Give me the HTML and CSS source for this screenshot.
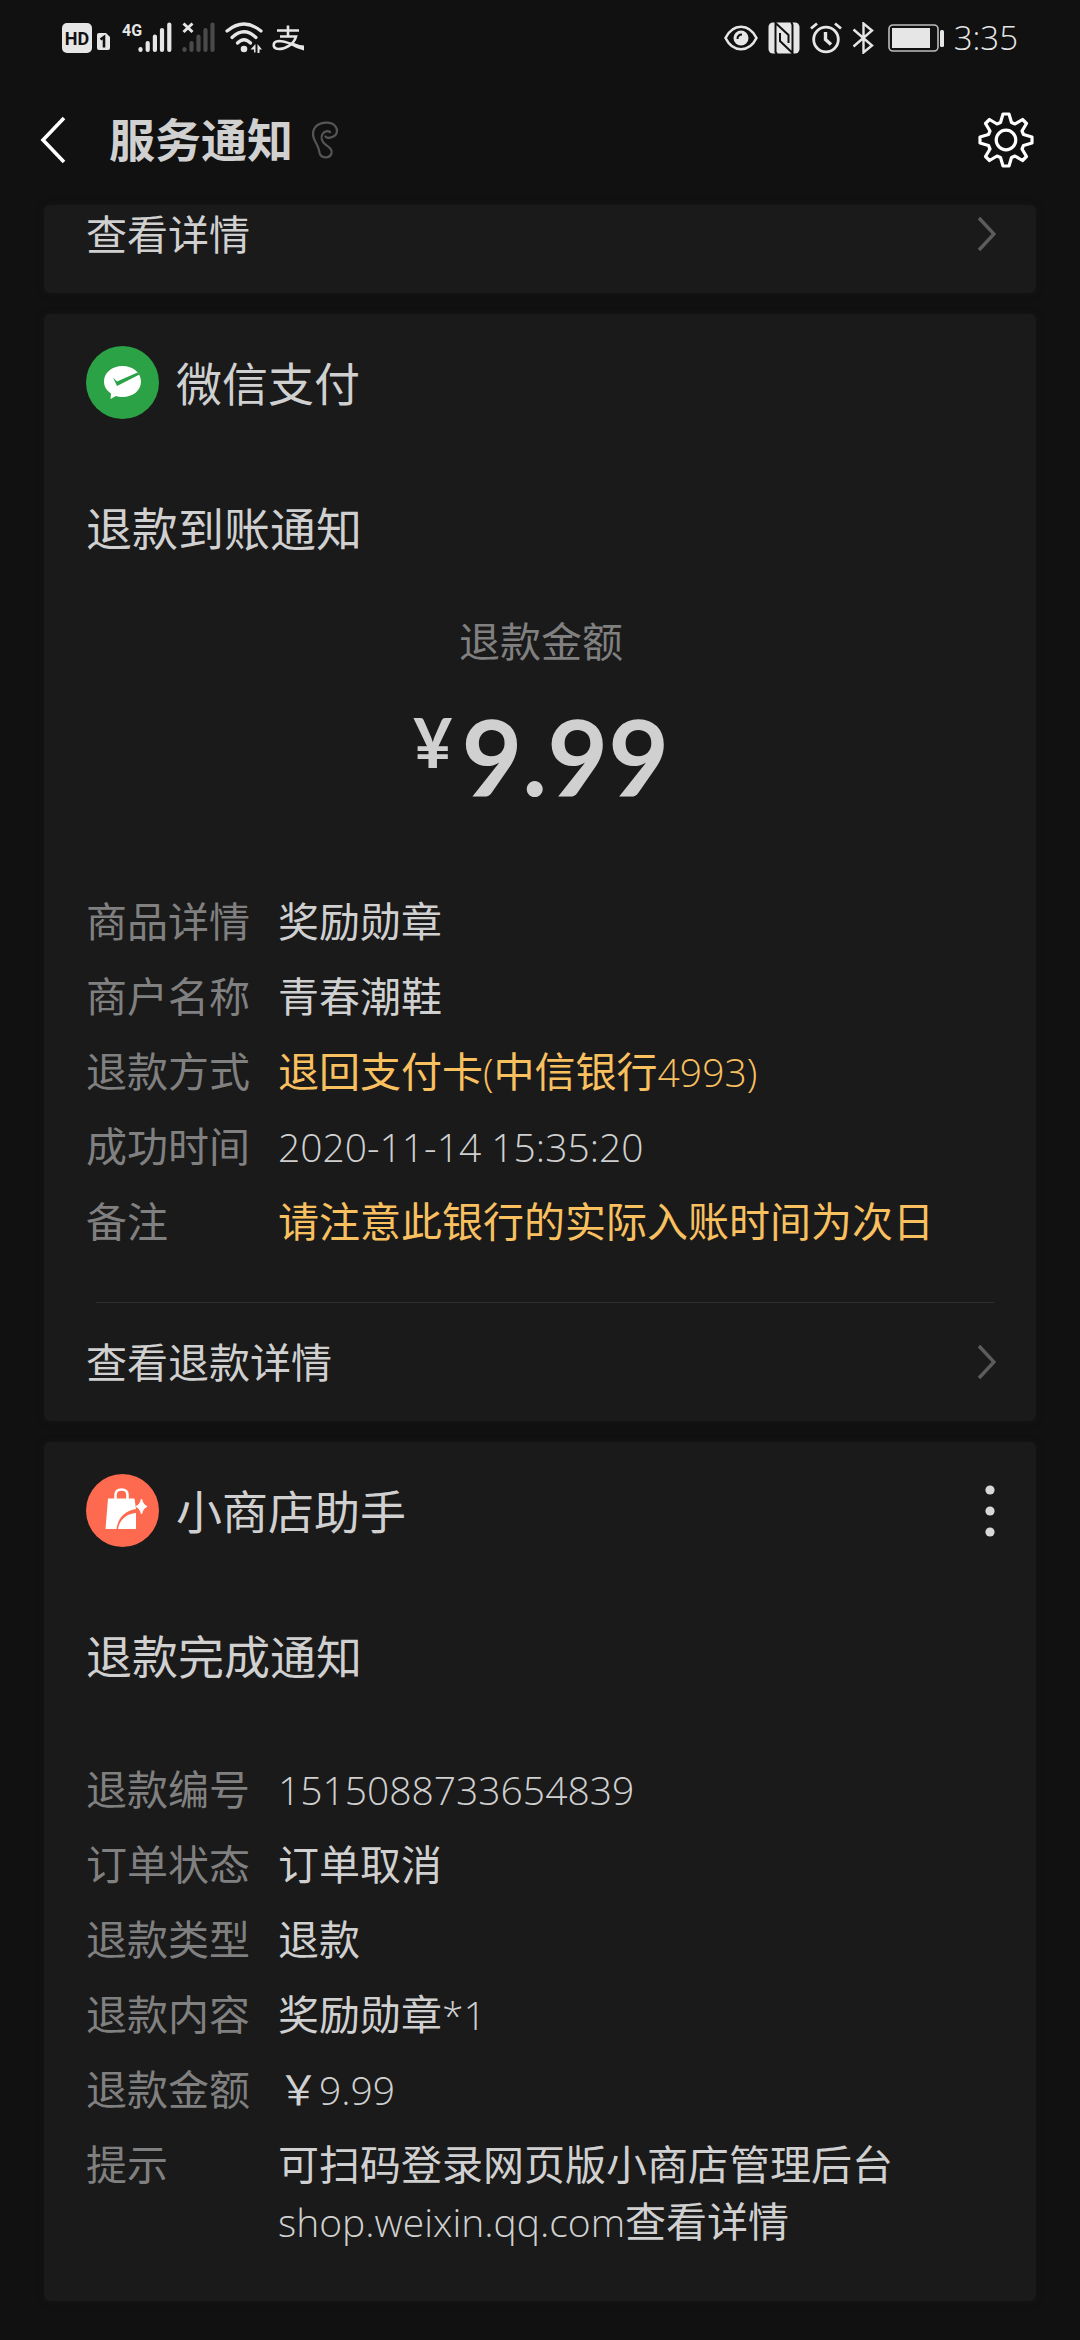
FILE: index.html
```html
<!DOCTYPE html>
<html lang="zh-CN">
<head>
<meta charset="utf-8">
<meta name="viewport" content="width=device-width, initial-scale=1">
<title>服务通知</title>
<link rel="stylesheet" href="styles.css">
</head>
<body>
<svg class="defs" aria-hidden="true">
  <symbol id="chevron" viewBox="0 0 20 36"><path d="M3 2 L18 18 L3 34" fill="none" stroke="#5c5c5c" stroke-width="3.4"/></symbol>
</svg>

<div class="status">
  <div class="status-group status-left">
    <svg width="50" height="32" viewBox="0 0 50 32" role="img" aria-label="HD 1">
      <rect x="0" y="1" width="30" height="30" rx="5" fill="#e6e6e6"/>
      <text x="15" y="23" class="hd-text">HD</text>
      <path d="M35 13 q0 -2 2 -2 h7 l4 4 v11 q0 2 -2 2 h-9 q-2 0 -2 -2z" fill="#e6e6e6"/>
      <path d="M38.5 17.5 L42 15 V25.5" fill="none" stroke="#111" stroke-width="2.6"/>
    </svg>
    <svg width="52" height="32" viewBox="0 0 52 32" role="img" aria-label="4G">
      <text x="1" y="14" class="net-text">4G</text>
      <g stroke="#e6e6e6" stroke-width="4.2" stroke-linecap="round"><path d="M19.5 27v1M26.7 21v7M33.9 14.5v13.5M41 8v20M48.3 2.5v25.5"/></g>
    </svg>
    <svg width="34" height="32" viewBox="0 0 34 32" aria-hidden="true">
      <g stroke="#4a4a4a" stroke-width="4.2" stroke-linecap="round"><path d="M2.5 27v1M9.5 21v7M16.5 14.5v13.5M23.5 8v20M30.5 2.5v25.5"/></g>
      <path d="M1.5 1.5 L10.5 10 M10.5 1.5 L1.5 10" stroke="#e6e6e6" stroke-width="3"/>
    </svg>
    <svg width="38" height="32" viewBox="0 0 38 32" aria-hidden="true">
      <g fill="none" stroke="#e6e6e6" stroke-width="3.2" stroke-linecap="round"><path d="M2 9 Q19 -5 36 9M7 15.5 Q19 4 31 15.5M12.5 21 Q19 14.5 25.5 21"/></g>
      <circle cx="19" cy="27" r="3.3" fill="#e6e6e6"/>
      <path d="M25.5 27.5 L30.5 22 V30.5 H29 V27.5z M32.5 22 L37 27.5 H34.5 V31 H32.5z" fill="#e6e6e6"/>
    </svg>
    <svg width="32" height="32" viewBox="0 0 32 32" aria-hidden="true">
      <g fill="none" stroke="#e6e6e6" stroke-width="2.6"><path d="M5 8.500H27M16 3.500V14M8 14.500H24C22 22 14 27 6.500 27C0 26.500 0 19.500 7 19C14 19 22 23.500 31 25.500"/></g>
      <path d="M20 20.5 Q26 23 32 23.500 V28.5 Q25 27 18.5 23z" fill="#e6e6e6"/>
    </svg>
  </div>
  <div class="status-group">
    <svg width="34" height="32" viewBox="0 0 34 32" aria-hidden="true">
      <path d="M1.500 16 C9 1 25 1 32.500 16 C25 31 9 31 1.500 16z" fill="none" stroke="#e6e6e6" stroke-width="2.6"/>
      <circle cx="17" cy="16" r="7.5" fill="#e6e6e6"/>
      <path d="M13.5 17 Q13.5 12.5 18 12.5" fill="none" stroke="#111" stroke-width="2"/>
    </svg>
    <svg width="32" height="32" viewBox="0 0 32 32" aria-hidden="true">
      <rect x="0.5" y="0.5" width="31" height="31" rx="4.5" fill="#e6e6e6"/>
      <path d="M7.5 0 V30 Q8 31 9 32M24.500 32V3 Q24 1 23 0M7.500 1 L20.500 13V21M24.500 31 L12 19V11" stroke="#111" stroke-width="2" fill="none"/>
    </svg>
    <svg width="32" height="32" viewBox="0 0 32 32" aria-hidden="true">
      <g fill="none" stroke="#e6e6e6" stroke-width="2.8"><circle cx="16" cy="17.5" r="12.3"/><path d="M1 6.500L7 1.500M25 1.500L31 6.500"/><path d="M15.500 10V17.500L21 22.500" stroke-width="3.4"/></g>
    </svg>
    <svg width="22" height="32" viewBox="0 0 22 32" aria-hidden="true">
      <path d="M1.500 7.500 L20 23.500 L11.500 30.500 V1.500 L20 8.500 L1.500 24.500" fill="none" stroke="#e6e6e6" stroke-width="2.4"/>
    </svg>
    <svg width="60" height="32" viewBox="-4 0 60 32" aria-hidden="true">
      <rect x="1" y="3" width="49" height="26" rx="4" fill="none" stroke="#bdbdbd" stroke-width="1.6"/>
      <rect x="4" y="6" width="38" height="20" fill="#e6e6e6"/>
      <rect x="52" y="8" width="4" height="17" rx="1.500" fill="#e6e6e6"/>
    </svg>
    <span class="clock">3:35</span>
  </div>
</div>

<header class="header">
  <button class="icon-btn back" aria-label="返回">
    <svg width="26" height="48" viewBox="0 0 26 48"><path d="M24 2 L3 24 L24 46" fill="none" stroke="#fff" stroke-width="3.6"/></svg>
  </button>
  <h1 class="title">服务通知</h1>
  <svg class="ear" width="28" height="38" viewBox="0 0 28 38" aria-hidden="true">
    <path d="M14.5 15.5 C15.5 17.5 19.5 17 22.5 15.5 C26.5 13.5 27 8.5 24.5 5.5 C21.5 1 12.5 0.5 7.5 3.5 C1.5 7 0.5 14 4 20 C6.5 24.5 8 28 8.5 31.5 C9.5 37.5 18.5 38 20.5 32.5 C22 28.5 18 26 15 24 C10.5 21 9.5 16 11.5 13 C13.500 10 17 9.500 19 11" fill="none" stroke="#555" stroke-width="2.2" stroke-linecap="round"/>
  </svg>
  <button class="icon-btn gear" aria-label="设置">
    <svg width="56" height="56" viewBox="-28 -28 56 56">
      <g fill="none" stroke="#fff" stroke-width="3.2" stroke-linejoin="round">
        <path d="M-3 -26 H3 L5.5 -17.5 L9 -16 L16.5 -20.5 L20.5 -16.5 L16 -9 L17.5 -5.5 L26 -3 V3 L17.5 5.5 L16 9 L20.5 16.5 L16.5 20.5 L9 16 L5.5 17.5 L3 26 H-3 L-5.5 17.5 L-9 16 L-16.5 20.5 L-20.5 16.5 L-16 9 L-17.5 5.5 L-26 3 V-3 L-17.5 -5.5 L-16 -9 L-20.5 -16.5 L-16.5 -20.5 L-9 -16 L-5.5 -17.5z"/>
        <circle r="9.8"/>
      </g>
    </svg>
  </button>
</header>

<main class="feed">
  <section class="card">
    <a class="more more-clipped" href="#">查看详情<svg width="20" height="36"><use href="#chevron"/></svg></a>
  </section>

  <section class="card">
    <div class="sender">
      <svg width="73" height="73" viewBox="0 0 73 73" aria-hidden="true">
        <circle cx="36.5" cy="36.5" r="36.5" fill="#2ba245"/>
        <path d="M36.5 20 C47 20 55 26.500 55 35.500 C55 44.500 47 51 36.500 51 C34 51 32 50.700 30 50 L24.500 53 L25 47.500 C20.500 44.500 18 40.500 18 35.500 C18 26.500 26 20 36.500 20z" fill="#fff"/>
        <path d="M27 31.5 L31 35.500 L51.500 26.500 L53.500 28.500 L31 40z" fill="#2ba245"/>
      </svg>
      <h2 class="sender-name">微信支付</h2>
    </div>
    <h3 class="subject">退款到账通知</h3>
    <p class="amount-label">退款金额</p>
    <p class="amount"><span class="yen">¥</span>9.99</p>
    <dl class="details pay">
      <dt>商品详情</dt><dd>奖励勋章</dd>
      <dt>商户名称</dt><dd>青春潮鞋</dd>
      <dt>退款方式</dt><dd class="warn">退回支付卡<span class="latin">(</span>中信银行<span class="latin">4993)</span></dd>
      <dt>成功时间</dt><dd><span class="latin">2020-11-14 15:35:20</span></dd>
      <dt>备注</dt><dd class="warn">请注意此银行的实际入账时间为次日</dd>
    </dl>
    <hr class="rule">
    <a class="more" href="#">查看退款详情<svg width="20" height="36"><use href="#chevron"/></svg></a>
  </section>

  <section class="card">
    <div class="sender">
      <svg width="73" height="73" viewBox="0 0 73 73" aria-hidden="true">
        <circle cx="36.5" cy="36.5" r="36.5" fill="#fd6a4f"/>
        <path d="M22 24.500H48.500L50 35 C39 36.500 32 44 30.500 55H19.500z" fill="#fff"/>
        <path d="M50 39 V55 H32 C33.500 46 40 40 50 39z" fill="#fff"/>
        <path d="M29.500 26V21Q29.500 15.500 35.500 15.500Q41.500 15.500 41.500 21V26" fill="none" stroke="#fff" stroke-width="2.6"/>
        <path d="M55.5 25 Q57 31 61 32.500 Q57 34 55.500 40 Q54 34 50 32.500 Q54 31 55.500 25z" fill="#fff" stroke="#fff" stroke-width="1"/>
      </svg>
      <h2 class="sender-name">小商店助手</h2>
      <button class="icon-btn menu" aria-label="更多">
        <svg width="12" height="54" viewBox="0 0 12 54"><g fill="#d8d8d8"><circle cx="6" cy="6" r="4.6"/><circle cx="6" cy="27" r="4.6"/><circle cx="6" cy="48" r="4.6"/></g></svg>
      </button>
    </div>
    <h3 class="subject">退款完成通知</h3>
    <dl class="details order">
      <dt>退款编号</dt><dd><span class="latin">1515088733654839</span></dd>
      <dt>订单状态</dt><dd>订单取消</dd>
      <dt>退款类型</dt><dd>退款</dd>
      <dt>退款内容</dt><dd>奖励勋章<span class="latin">*1</span></dd>
      <dt>退款金额</dt><dd>￥<span class="latin">9.99</span></dd>
      <dt>提示</dt><dd>可扫码登录网页版小商店管理后台<span class="latin">shop.weixin.qq.com</span>查看详情</dd>
    </dl>
  </section>
</main>
</body>
</html>
```

FILE: styles.css
```css
* { box-sizing: border-box; }

body {
  margin: 0;
  background: #111;
  color: #d0d0d0;
  font-family: "Open Sans", "Noto Sans CJK SC", sans-serif;
  font-size: 41px;
  line-height: 57px;
}

h1, h2, h3, p, dl, dd { margin: 0; }

svg { display: block; flex: none; }

.defs { width: 0; height: 0; position: absolute; }

.status {
  display: flex;
  justify-content: space-between;
  align-items: center;
  height: 75px;
  padding: 0 62px;
}

.status-group {
  display: flex;
  align-items: center;
  gap: 10px;
}

.status-left { gap: 9px; }

.hd-text {
  font: 700 18px Roboto, sans-serif;
  text-anchor: middle;
  fill: #111;
}

.net-text {
  font: 700 16px Roboto, sans-serif;
  fill: #e6e6e6;
}

.clock {
  color: #e6e6e6;
  font-size: 33px;
  font-weight: 300;
  line-height: 40px;
}

.header {
  display: flex;
  align-items: center;
  height: 130px;
  padding: 0 46px 0 40px;
}

.icon-btn {
  flex: none;
  padding: 0;
  border: 0;
  background: none;
}

.title {
  margin-left: 43px;
  padding-bottom: 2px;
  font-size: 46px;
  line-height: 60px;
  font-weight: 700;
}

.ear { margin-left: 18px; }

.gear { margin-left: auto; }

.feed {
  display: flex;
  flex-direction: column;
  gap: 21px;
  padding: 0 44px 32px;
}

.card {
  padding: 0 40px 0 42px;
  border-radius: 6px;
  background: #1a1a1a;
  box-shadow: 0 0 6px #161616;
}

.more {
  display: flex;
  align-items: center;
  justify-content: space-between;
  height: 118px;
  color: inherit;
  text-decoration: none;
}

.more-clipped {
  height: 58px;
  margin-bottom: 30px;
}

.sender {
  display: flex;
  align-items: center;
  gap: 17px;
  padding-top: 32px;
}

.sender-name,
.subject {
  font-size: 46px;
  line-height: 60px;
  font-weight: 400;
}

.menu { margin-left: auto; }

.subject { margin-top: 79px; }

.amount-label {
  margin-top: 55px;
  color: #808080;
  text-align: center;
}

.amount {
  display: flex;
  justify-content: center;
  gap: 9px;
  margin-top: 31px;
  font-family: Lato, sans-serif;
  font-size: 105px;
  line-height: 108px;
  font-weight: 700;
}

.yen {
  font-size: 68px;
  line-height: 82px;
}

.details {
  display: grid;
  grid-template-columns: 164px 1fr;
  gap: 18px 28px;
}

.details dt { color: #808080; }

.pay { margin-top: 84px; }

.order {
  margin-top: 75px;
  padding-bottom: 51px;
}

.warn { color: #f9c060; }

.latin {
  font-size: 39px;
  font-weight: 300;
}

.rule {
  height: 1px;
  margin: 52px 2px 0 10px;
  border: 0;
  background: #2e2e2e;
}
```
